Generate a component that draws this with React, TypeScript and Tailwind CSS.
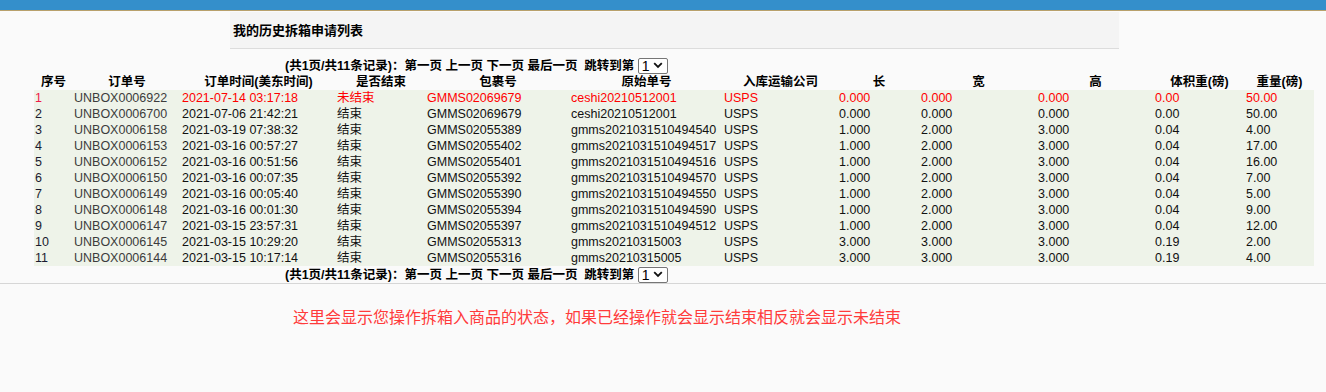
import React from 'react';

type Row = {
  no: string;
  order: string;
  time: string;
  done: boolean;
  pkg: string;
  orig: string;
  carrier: string;
  l: string;
  w: string;
  h: string;
  vol: string;
  weight: string;
};

const rows: Row[] = [
  { no: '1', order: 'UNBOX0006922', time: '2021-07-14 03:17:18', done: false, pkg: 'GMMS02069679', orig: 'ceshi20210512001', carrier: 'USPS', l: '0.000', w: '0.000', h: '0.000', vol: '0.00', weight: '50.00' },
  { no: '2', order: 'UNBOX0006700', time: '2021-07-06 21:42:21', done: true, pkg: 'GMMS02069679', orig: 'ceshi20210512001', carrier: 'USPS', l: '0.000', w: '0.000', h: '0.000', vol: '0.00', weight: '50.00' },
  { no: '3', order: 'UNBOX0006158', time: '2021-03-19 07:38:32', done: true, pkg: 'GMMS02055389', orig: 'gmms2021031510494540', carrier: 'USPS', l: '1.000', w: '2.000', h: '3.000', vol: '0.04', weight: '4.00' },
  { no: '4', order: 'UNBOX0006153', time: '2021-03-16 00:57:27', done: true, pkg: 'GMMS02055402', orig: 'gmms2021031510494517', carrier: 'USPS', l: '1.000', w: '2.000', h: '3.000', vol: '0.04', weight: '17.00' },
  { no: '5', order: 'UNBOX0006152', time: '2021-03-16 00:51:56', done: true, pkg: 'GMMS02055401', orig: 'gmms2021031510494516', carrier: 'USPS', l: '1.000', w: '2.000', h: '3.000', vol: '0.04', weight: '16.00' },
  { no: '6', order: 'UNBOX0006150', time: '2021-03-16 00:07:35', done: true, pkg: 'GMMS02055392', orig: 'gmms2021031510494570', carrier: 'USPS', l: '1.000', w: '2.000', h: '3.000', vol: '0.04', weight: '7.00' },
  { no: '7', order: 'UNBOX0006149', time: '2021-03-16 00:05:40', done: true, pkg: 'GMMS02055390', orig: 'gmms2021031510494550', carrier: 'USPS', l: '1.000', w: '2.000', h: '3.000', vol: '0.04', weight: '5.00' },
  { no: '8', order: 'UNBOX0006148', time: '2021-03-16 00:01:30', done: true, pkg: 'GMMS02055394', orig: 'gmms2021031510494590', carrier: 'USPS', l: '1.000', w: '2.000', h: '3.000', vol: '0.04', weight: '9.00' },
  { no: '9', order: 'UNBOX0006147', time: '2021-03-15 23:57:31', done: true, pkg: 'GMMS02055397', orig: 'gmms2021031510494512', carrier: 'USPS', l: '1.000', w: '2.000', h: '3.000', vol: '0.04', weight: '12.00' },
  { no: '10', order: 'UNBOX0006145', time: '2021-03-15 10:29:20', done: true, pkg: 'GMMS02055313', orig: 'gmms20210315003', carrier: 'USPS', l: '3.000', w: '3.000', h: '3.000', vol: '0.19', weight: '2.00' },
  { no: '11', order: 'UNBOX0006144', time: '2021-03-15 10:17:14', done: true, pkg: 'GMMS02055316', orig: 'gmms20210315005', carrier: 'USPS', l: '3.000', w: '3.000', h: '3.000', vol: '0.19', weight: '4.00' },
];

const headers = ['序号', '订单号', '订单时间(美东时间)', '是否结束', '包裹号', '原始单号', '入库运输公司', '长', '宽', '高', '体积重(磅)', '重量(磅)'];
const widths = [39, 108, 155, 90, 144, 153, 115, 82, 117, 117, 91, 69];

function Pager() {
  return (
    <div className="h-[17px] pl-[285px] flex items-center text-[12.5px] font-bold leading-4 text-black whitespace-pre">
      <span>(共1页/共11条记录)：第一页 上一页 下一页 最后一页  跳转到第 </span>
      <span className="inline-flex items-center h-4 w-[30px] border border-[#767676] rounded-[2px] bg-white pl-[3px] gap-[3px] font-normal text-[14px]">
        <span>1</span>
        <svg width="10" height="7" viewBox="0 0 10 7">
          <path d="M1.2 1.2 5 5 8.8 1.2" fill="none" stroke="#111" strokeWidth="1.8" />
        </svg>
      </span>
    </div>
  );
}

export default function App() {
  return (
    <div className="min-h-screen bg-[#fafafa] font-['Liberation_Sans','Noto_Sans_CJK_SC',sans-serif] text-black">
      <div className="h-[11px] bg-[#348fcb] border-b border-[#b8a16c]" />

      <div className="mt-px ml-[230px] w-[889px] h-[37px] bg-[#f4f4f4] border-b border-[#dcdcdc] flex items-center pl-[3px] pt-[2px]">
        <span className="text-[13px] font-bold">我的历史拆箱申请列表</span>
      </div>

      <div className="mt-2">
        <Pager />
      </div>

      <table className="ml-[34px] w-[1280px] table-fixed border-collapse text-[12.5px]">
        <colgroup>
          {widths.map((w, i) => (
            <col key={i} style={{ width: w }} />
          ))}
        </colgroup>
        <thead>
          <tr className="h-4">
            {headers.map((h) => (
              <th key={h} className="p-0 leading-4 font-bold text-center whitespace-nowrap">
                {h}
              </th>
            ))}
          </tr>
        </thead>
        <tbody>
          {rows.map((r) => {
            const red = !r.done;
            const c = red ? 'text-[#ff0000]' : 'text-[#111]';
            const cells = [r.time, r.done ? '结束' : '未结束', r.pkg, r.orig, r.carrier, r.l, r.w, r.h, r.vol, r.weight];
            return (
              <tr key={r.no} className="h-4 bg-[#eef3e9]">
                <td className={`p-0 pl-px leading-4 whitespace-nowrap ${red ? 'text-[#f0184a]' : 'text-[#1a1a30]'}`}>{r.no}</td>
                <td className="p-0 pl-px leading-4 whitespace-nowrap text-[#3c3c3c]">{r.order}</td>
                {cells.map((v, i) => (
                  <td key={i} className={`p-0 pl-px leading-4 whitespace-nowrap ${c}`}>
                    {v}
                  </td>
                ))}
              </tr>
            );
          })}
        </tbody>
      </table>

      <Pager />

      <div className="border-t border-[#d6d6d6]" />

      <div className="mt-6 pl-[293px] text-[16px] leading-5 text-[#ff3b3b]">
        这里会显示您操作拆箱入商品的状态，如果已经操作就会显示结束相反就会显示未结束
      </div>
    </div>
  );
}
